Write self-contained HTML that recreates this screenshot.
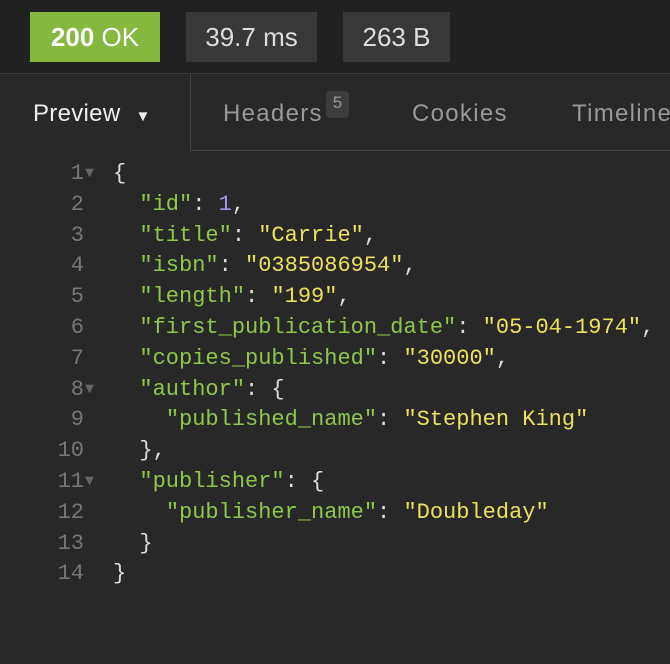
<!DOCTYPE html>
<html><head><style>
body{margin:0;width:670px;height:664px;background:#282828;font-family:"Liberation Sans",sans-serif;overflow:hidden;position:relative}
.top{position:absolute;left:0;top:0;width:670px;height:73px;background:#212121;border-bottom:1px solid #3a3a3a}
.b{position:absolute;top:12px;height:50px;line-height:50px;font-size:26px;text-align:center;color:#ddd;background:#383838}
.tabs{position:absolute;top:74px;left:0;width:670px;height:77px}
.t{position:absolute;top:0;line-height:80px;font-size:24px;color:#999;letter-spacing:1.3px}
.code{position:absolute;top:159px;left:0;font-family:"Liberation Mono",monospace;font-size:22px;line-height:30.8px;color:#ddd;white-space:pre}
.ln{display:inline-block;width:84px;text-align:right;color:#777}
.ar{display:inline-block;width:29px;color:#666;font-size:15px;vertical-align:top;text-indent:1px}
.k{color:#8fc74a}.s{color:#ece15e}.n{color:#a796e8}
</style></head><body>
<div class="top">
<div class="b" style="left:30px;width:130px;background:#84b83f;color:#fff;font-weight:bold">200 <span style="font-weight:normal">OK</span></div>
<div class="b" style="left:186px;width:131px">39.7 ms</div>
<div class="b" style="left:343px;width:107px">263 B</div>
</div>
<div class="tabs">
<div class="t" style="left:33px;color:#eee;letter-spacing:0.3px">Preview <span style="font-size:15px;margin-left:8px">▼</span></div>
<div style="position:absolute;left:190px;top:0;width:1px;height:76px;background:#444"></div>
<div style="position:absolute;left:190px;top:76px;width:480px;height:1px;background:#444"></div>
<div class="t" style="left:223px">Headers</div>
<div style="position:absolute;left:326px;top:17px;width:23px;height:27px;background:#3c3c3c;border-radius:4px;color:#999;font-size:17px;text-align:center;line-height:24px">5</div>
<div class="t" style="left:412px">Cookies</div>
<div class="t" style="left:572px">Timeline</div>
</div>
<div class="code"><span class="ln">1</span><span class="ar">▼</span>{
<span class="ln">2</span><span class="ar"></span>  <span class="k">"id"</span>: <span class="n">1</span>,
<span class="ln">3</span><span class="ar"></span>  <span class="k">"title"</span>: <span class="s">"Carrie"</span>,
<span class="ln">4</span><span class="ar"></span>  <span class="k">"isbn"</span>: <span class="s">"0385086954"</span>,
<span class="ln">5</span><span class="ar"></span>  <span class="k">"length"</span>: <span class="s">"199"</span>,
<span class="ln">6</span><span class="ar"></span>  <span class="k">"first_publication_date"</span>: <span class="s">"05-04-1974"</span>,
<span class="ln">7</span><span class="ar"></span>  <span class="k">"copies_published"</span>: <span class="s">"30000"</span>,
<span class="ln">8</span><span class="ar">▼</span>  <span class="k">"author"</span>: {
<span class="ln">9</span><span class="ar"></span>    <span class="k">"published_name"</span>: <span class="s">"Stephen King"</span>
<span class="ln">10</span><span class="ar"></span>  },
<span class="ln">11</span><span class="ar">▼</span>  <span class="k">"publisher"</span>: {
<span class="ln">12</span><span class="ar"></span>    <span class="k">"publisher_name"</span>: <span class="s">"Doubleday"</span>
<span class="ln">13</span><span class="ar"></span>  }
<span class="ln">14</span><span class="ar"></span>}</div>
</body></html>
